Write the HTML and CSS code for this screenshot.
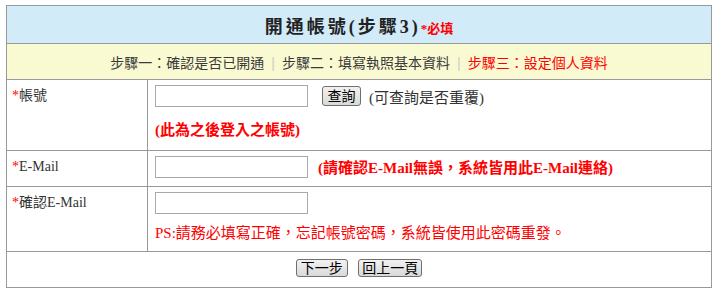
FILE: index.html
```html
<!DOCTYPE html>
<html lang="zh-Hant">

<head>
    <meta charset="UTF-8">
    <meta name="viewport" content="width=device-width, initial-scale=1.0">
    <title>開通帳號</title>
    <link rel="stylesheet" href="styles.css">
</head>

<body>
    <table class="reg-table">
        <tr>
            <td colspan="2" class="reg-title">開通帳號(步驟3)<span class="must">*必填</span></td>
        </tr>
        <tr>
            <td colspan="2" class="reg-steps">
                步驟一：確認是否已開通<span class="sep">|</span>步驟二：填寫執照基本資料<span class="sep">|</span><span class="now">步驟三：設定個人資料</span>
            </td>
        </tr>
        <tr>
            <td class="lbl"><span class="star">*</span>帳號</td>
            <td class="fld fld-tall">
                <div class="line">
                    <input type="text" class="txt" name="account">
                    <button class="btn btn-query">查詢</button>
                    <span class="hint">(可查詢是否重覆)</span>
                </div>
                <div class="note">(此為之後登入之帳號)</div>
            </td>
        </tr>
        <tr>
            <td class="lbl"><span class="star">*</span>E-Mail</td>
            <td class="fld fld-short">
                <div class="line">
                    <input type="text" class="txt" name="email">
                    <span class="note note-inline">(請確認E-Mail無誤，系統皆用此E-Mail連絡)</span>
                </div>
            </td>
        </tr>
        <tr>
            <td class="lbl"><span class="star">*</span>確認E-Mail</td>
            <td class="fld fld-mid">
                <div class="line">
                    <input type="text" class="txt" name="email2">
                </div>
                <div class="ps">PS:請務必填寫正確，忘記帳號密碼，系統皆使用此密碼重發。</div>
            </td>
        </tr>
        <tr>
            <td colspan="2" class="actions">
                <button class="btn btn-next">下一步</button>
                <button class="btn btn-back">回上一頁</button>
            </td>
        </tr>
    </table>
</body>

</html>
```

FILE: styles.css
```css
body {
    margin: 5px 6px;
    background-color: #ffffff;
    font-family: "Liberation Serif", "Noto Sans CJK TC", serif;
    font-size: 14px;
    color: #333333;
}

.reg-table {
    width: 706px;
    border-collapse: collapse;
    border: 1px solid #999999;
}

.reg-table td {
    border: 1px solid #999999;
    padding: 0;
}

.reg-title {
    height: 37px;
    background-color: #d2ebf9;
    text-align: center;
    font-size: 18px;
    font-weight: bold;
    letter-spacing: 3px;
    color: #222222;
}

.must {
    font-size: 13px;
    letter-spacing: 0;
    color: #ff0000;
}

.reg-steps {
    height: 35px;
    background-color: #fafad2;
    text-align: center;
    font-family: "Liberation Sans", "Noto Sans CJK TC", sans-serif;
    font-size: 14px;
    color: #3a3a3a;
}

.sep {
    color: #cccccc;
    margin: 0 7px;
}

.now {
    color: #ff0000;
}

.lbl {
    width: 135px;
    padding: 7px 0 0 5px !important;
    vertical-align: top;
    line-height: 18px;
}

.star {
    color: #ff0000;
}

.fld {
    vertical-align: top;
    padding: 5px 7px 0 7px !important;
}

.fld-tall {
    height: 65px;
}

.fld-short {
    height: 30px;
}

.fld-mid {
    height: 59px;
}

.line {
    display: flex;
    align-items: center;
    height: 22px;
}

.txt {
    box-sizing: border-box;
    width: 153px;
    height: 22px;
    margin: 0;
    border: 1px solid #a9a9a9;
    padding: 1px 3px;
}

.btn {
    box-sizing: border-box;
    height: 18px;
    padding: 0 6px;
    border: 1px solid #707070;
    border-radius: 3px;
    background: linear-gradient(#f2f2f2, #d9d9d9);
    font-family: "Liberation Sans", "Noto Sans CJK TC", sans-serif;
    font-size: 14px;
    line-height: 16px;
    color: #000000;
}

.btn-query {
    width: 39px;
    height: 20px;
    margin-left: 14px;
    padding: 0;
}

.hint {
    margin-left: 8px;
    font-size: 15px;
    color: #333333;
}

.note {
    margin-top: 14px;
    line-height: 18px;
    font-size: 15px;
    font-weight: bold;
    color: #ff0000;
}

.note-inline {
    margin: 2px 0 0 10px;
}

.ps {
    margin-top: 10px;
    line-height: 18px;
    font-size: 15px;
    color: #ff0000;
}

.actions {
    height: 28px;
    text-align: center;
    vertical-align: top;
    padding-top: 7px !important;
}

.btn-next {
    width: 52px;
    padding: 0;
}

.btn-back {
    width: 64px;
    margin-left: 7px;
    padding: 0;
}
```
